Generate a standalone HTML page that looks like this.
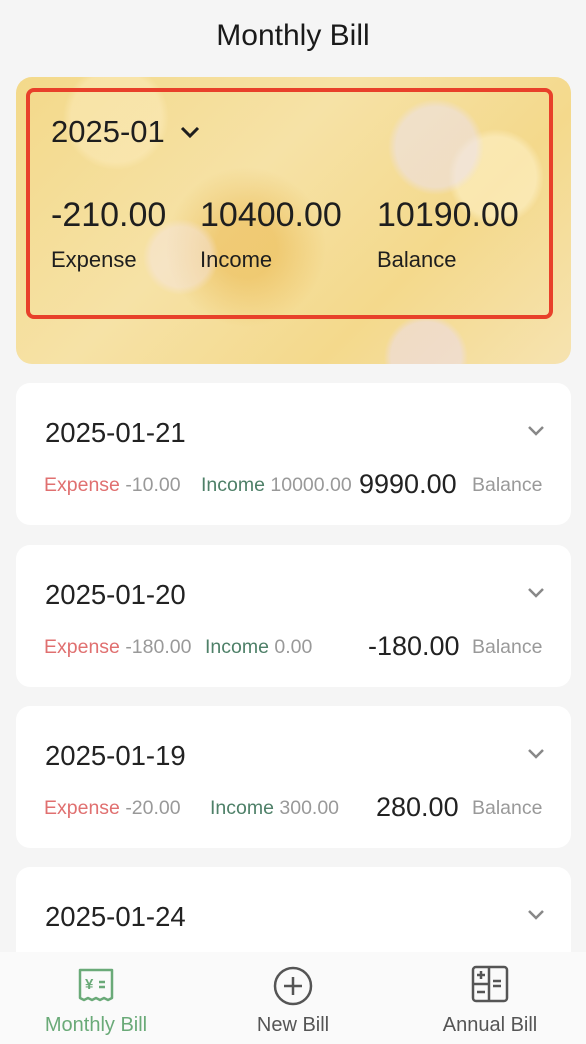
<!DOCTYPE html>
<html><head><meta charset="utf-8"><style>
*{margin:0;padding:0;box-sizing:border-box}
body{width:586px;height:1044px;overflow:hidden;background:#f5f5f5;font-family:"Liberation Sans",sans-serif;position:relative}
.title{position:absolute;top:19px;width:100%;text-align:center;font-size:30px;color:#1a1a1a}
.hero{position:absolute;left:16px;top:77px;width:555px;height:287px;border-radius:16px;overflow:hidden;
background:
radial-gradient(circle at 420px 70px,rgba(235,225,245,.5) 0 40px,transparent 48px),
radial-gradient(circle at 410px 280px,rgba(235,220,245,.5) 0 35px,transparent 42px),
radial-gradient(circle at 165px 180px,rgba(245,230,240,.4) 0 30px,transparent 38px),
radial-gradient(circle at 230px 170px,rgba(230,170,50,.4) 0 30px,transparent 80px),
radial-gradient(circle at 480px 100px,rgba(255,245,210,.5) 0 40px,transparent 48px),
radial-gradient(circle at 100px 40px,rgba(255,240,200,.4) 0 45px,transparent 53px),
linear-gradient(135deg,#f3d98a,#f6e2a6 40%,#f4d98c 70%,#f6e3b0);}
.red{position:absolute;left:26px;top:88px;width:527px;height:231px;border:4px solid #e8402a;border-radius:8px}
.h{position:absolute;color:#1e1e1e}
.card{position:absolute;left:16px;width:555px;height:142px;background:#fff;border-radius:14px}
.card .d{position:absolute;left:29px;top:34px;font-size:27.5px;color:#222}
.card .chev{position:absolute;right:26px;top:42px}
.card .r{position:absolute;top:91px;font-size:19.5px}
.exp{color:#e07070}.ev{color:#999}.inc{color:#4e8068}.bal{color:#222;font-size:27px!important;top:86px!important}.bl{color:#999}
.tab{position:absolute;left:0;top:952px;width:586px;height:92px;background:#fafafa}
.tl{position:absolute;top:62px;font-size:20px;color:#555;text-align:center}
</style></head><body>
<div class="title">Monthly Bill</div>
<div class="hero"></div>
<div class="red"></div>
<div class="h" style="left:51px;top:114px;font-size:31px">2025-01</div>
<svg style="position:absolute;left:179px;top:125px" width="22" height="14"><path d="M3 3l8 8 8-8" stroke="#1e1e1e" stroke-width="3" fill="none"/></svg>
<div class="h" style="left:51px;top:196px;font-size:34px">-210.00</div>
<div class="h" style="left:200px;top:196px;font-size:34px">10400.00</div>
<div class="h" style="left:377px;top:196px;font-size:34px">10190.00</div>
<div class="h" style="left:51px;top:247px;font-size:22px">Expense</div>
<div class="h" style="left:200px;top:247px;font-size:22px">Income</div>
<div class="h" style="left:377px;top:247px;font-size:22px">Balance</div>

<div class="card" style="top:383px"><div class="d">2025-01-21</div>
<svg class="chev" width="18" height="12"><path d="M2 2l7 7 7-7" stroke="#888" stroke-width="2.5" fill="none"/></svg>
<div class="r" style="left:28px"><span class="exp">Expense</span> <span class="ev">-10.00</span></div>
<div class="r" style="left:185px"><span class="inc">Income</span> <span class="ev">10000.00</span></div>
<div class="r bal" style="left:343px">9990.00</div>
<div class="r bl" style="left:456px">Balance</div></div>

<div class="card" style="top:545px"><div class="d">2025-01-20</div>
<svg class="chev" width="18" height="12"><path d="M2 2l7 7 7-7" stroke="#888" stroke-width="2.5" fill="none"/></svg>
<div class="r" style="left:28px"><span class="exp">Expense</span> <span class="ev">-180.00</span></div>
<div class="r" style="left:189px"><span class="inc">Income</span> <span class="ev">0.00</span></div>
<div class="r bal" style="left:352px">-180.00</div>
<div class="r bl" style="left:456px">Balance</div></div>

<div class="card" style="top:706px"><div class="d">2025-01-19</div>
<svg class="chev" width="18" height="12"><path d="M2 2l7 7 7-7" stroke="#888" stroke-width="2.5" fill="none"/></svg>
<div class="r" style="left:28px"><span class="exp">Expense</span> <span class="ev">-20.00</span></div>
<div class="r" style="left:194px"><span class="inc">Income</span> <span class="ev">300.00</span></div>
<div class="r bal" style="left:360px">280.00</div>
<div class="r bl" style="left:456px">Balance</div></div>

<div class="card" style="top:867px"><div class="d">2025-01-24</div>
<svg class="chev" width="18" height="12"><path d="M2 2l7 7 7-7" stroke="#888" stroke-width="2.5" fill="none"/></svg></div>

<div class="tab">
<svg style="position:absolute;left:77px;top:15px" width="38" height="36"><path d="M3 3h32v28l-4 2-4-2-4 2-4-2-4 2-4-2-4 2-4-2z" stroke="#6aaa78" stroke-width="2.5" fill="none" stroke-linejoin="round"/><text x="8" y="22" font-size="15" font-weight="bold" fill="#6aaa78" font-family="Liberation Sans">¥</text><path d="M22 15h6M22 20h6" stroke="#6aaa78" stroke-width="2.5"/></svg>
<div class="tl" style="left:0;width:192px;color:#6aaa78">Monthly Bill</div>
<svg style="position:absolute;left:272px;top:13px" width="42" height="42"><circle cx="21" cy="21" r="18" stroke="#555" stroke-width="2.5" fill="none"/><path d="M21 12v18M12 21h18" stroke="#555" stroke-width="2.5"/></svg>
<div class="tl" style="left:196px;width:194px">New Bill</div>
<svg style="position:absolute;left:471px;top:13px" width="38" height="38"><rect x="2" y="2" width="34" height="34" rx="3" stroke="#555" stroke-width="2.5" fill="none"/><path d="M18 2v34M2 19h16M6 10h8M10 6v8M6 27h8M22 16h8M22 21h8" stroke="#555" stroke-width="2.5"/></svg>
<div class="tl" style="left:394px;width:192px">Annual Bill</div>
</div>
</body></html>
